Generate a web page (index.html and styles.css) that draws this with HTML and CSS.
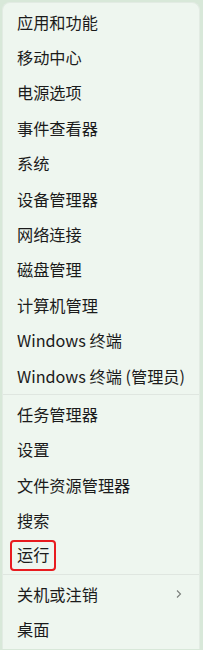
FILE: index.html
```html
<!DOCTYPE html>
<html>
	<head>
		<title>快速链接菜单</title><meta charset="utf-8">
		<link rel="stylesheet" href="styles.css">
	</head>
	<body>
		<div class="menu">
			<div class="grupo">
				<div class="item">应用和功能</div>
				<div class="item">移动中心</div>
				<div class="item">电源选项</div>
				<div class="item">事件查看器</div>
				<div class="item">系统</div>
				<div class="item">设备管理器</div>
				<div class="item">网络连接</div>
				<div class="item">磁盘管理</div>
				<div class="item">计算机管理</div>
				<div class="item">Windows 终端</div>
				<div class="item">Windows 终端 (管理员)</div>
			</div>
			<div class="sep"></div>
			<div class="grupo">
				<div class="item">任务管理器</div>
				<div class="item">设置</div>
				<div class="item">文件资源管理器</div>
				<div class="item">搜索</div>
				<div class="item"><span class="marcado">运行</span></div>
			</div>
			<div class="sep"></div>
			<div class="grupo">
				<div class="item sub">关机或注销
					<svg class="flecha" width="8" height="10" viewBox="0 0 8 10"><path d="M2 1.5 L5.5 5 L2 8.5" fill="none" stroke="#7a7f7b" stroke-width="1.1"/></svg>
				</div>
				<div class="item">桌面</div>
			</div>
		</div>
	</body>
</html>
```
FILE: styles.css
```css
html, body {margin: 0; padding: 0;}
body {background-color: #d8e8d9; font-family: "Noto Sans CJK SC", "Noto Sans", sans-serif; padding: 2px 3px 0 2px; height: 650px; box-sizing: border-box; overflow: hidden;}
.menu {background-color: #eef6ef; border: 1px solid #e2ebe3; border-bottom: none; border-radius: 8px 8px 0 0; height: 647px; box-sizing: border-box; padding-top: 1px; overflow: hidden;}
.item {height: 35.4px; display: flex; align-items: center; padding-left: 14px; font-size: 16.2px; color: #1b1b1b; position: relative;}
.sep {height: 1px; background-color: #dfe6e0; margin: 1px 0 0;}
.grupo + .sep + .grupo .item:first-child {margin-top: 1px;}
.marcado {border: 2px solid #e81b1f; border-radius: 4px; padding: 3px 5px 4px; margin-left: -7px; line-height: 1.2;}
.flecha {position: absolute; right: 16px; top: 13px;}
```
